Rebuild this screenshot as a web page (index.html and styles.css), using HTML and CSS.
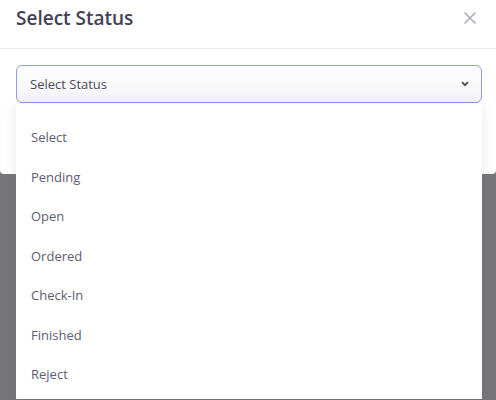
FILE: index.html
```html
<!DOCTYPE html>
<html>
<head>
<meta charset="utf-8">
<link rel="stylesheet" href="styles.css">
</head>
<body>
<div class="modal">
  <div class="modal-header">
    <h2 class="title">Select Status</h2>
    <button class="close" aria-label="Close">
      <svg width="12" height="12" viewBox="0 0 12 12"><path d="M1 1L11 11M11 1L1 11" stroke="#a9abb9" stroke-width="1.6" stroke-linecap="round"/></svg>
    </button>
  </div>
  <div class="modal-body">
    <div class="select-wrap">
      <div class="select">
        <span class="select-text">Select Status</span>
        <svg class="chevron" width="8" height="6" viewBox="0 0 8 6"><path d="M1 1.2L4 4.2L7 1.2" fill="none" stroke="#4b4a5c" stroke-width="1.8"/></svg>
      </div>
      <ul class="menu">
        <li>Select</li>
        <li>Pending</li>
        <li>Open</li>
        <li>Ordered</li>
        <li>Check-In</li>
        <li>Finished</li>
        <li>Reject</li>
      </ul>
    </div>
  </div>
</div>
</body>
</html>
```

FILE: styles.css
```css
html, body {
  margin: 0;
  padding: 0;
  height: 100%;
  overflow: hidden;
}
body {
  background: #76767a;
  font-family: "Open Sans", "Noto Sans", sans-serif;
}
.modal {
  background: #fff;
  height: 174px;
  border-radius: 0 0 4px 4px;
}
.modal-header {
  height: 49px;
  box-sizing: border-box;
  border-bottom: 1px solid #e9e9ec;
  display: flex;
  justify-content: space-between;
  align-items: flex-start;
  padding: 4px 18px 0 16px;
}
.title {
  margin: 0;
  font-size: 19px;
  line-height: 28px;
  font-weight: 600;
  color: #434157;
}
.close {
  border: 0;
  background: none;
  padding: 0;
  margin-top: 6px;
  width: 16px;
  height: 16px;
  display: flex;
  align-items: center;
  justify-content: center;
}
.modal-body {
  padding: 16px 14px 0 16px;
}
.select-wrap {
  position: relative;
}
.select {
  height: 38px;
  box-sizing: border-box;
  border: 1px solid #8f9cf2;
  border-radius: 6px;
  background: linear-gradient(#ffffff, #f3f3f6);
  display: flex;
  align-items: center;
  justify-content: space-between;
  padding: 0 12px 0 13px;
}
.select-text {
  font-size: 13px;
  color: #4b4a5c;
}
.menu {
  position: absolute;
  left: 0;
  right: 0;
  top: 39px;
  margin: 0;
  padding: 14px 0 0;
  list-style: none;
  background: #fff;
  box-shadow: 0 2px 12px rgba(60, 60, 90, 0.12);
  height: 281px;
}
.menu li {
  height: 39.5px;
  line-height: 39.5px;
  padding-left: 15px;
  font-size: 13px;
  color: #5d5c70;
}
```
